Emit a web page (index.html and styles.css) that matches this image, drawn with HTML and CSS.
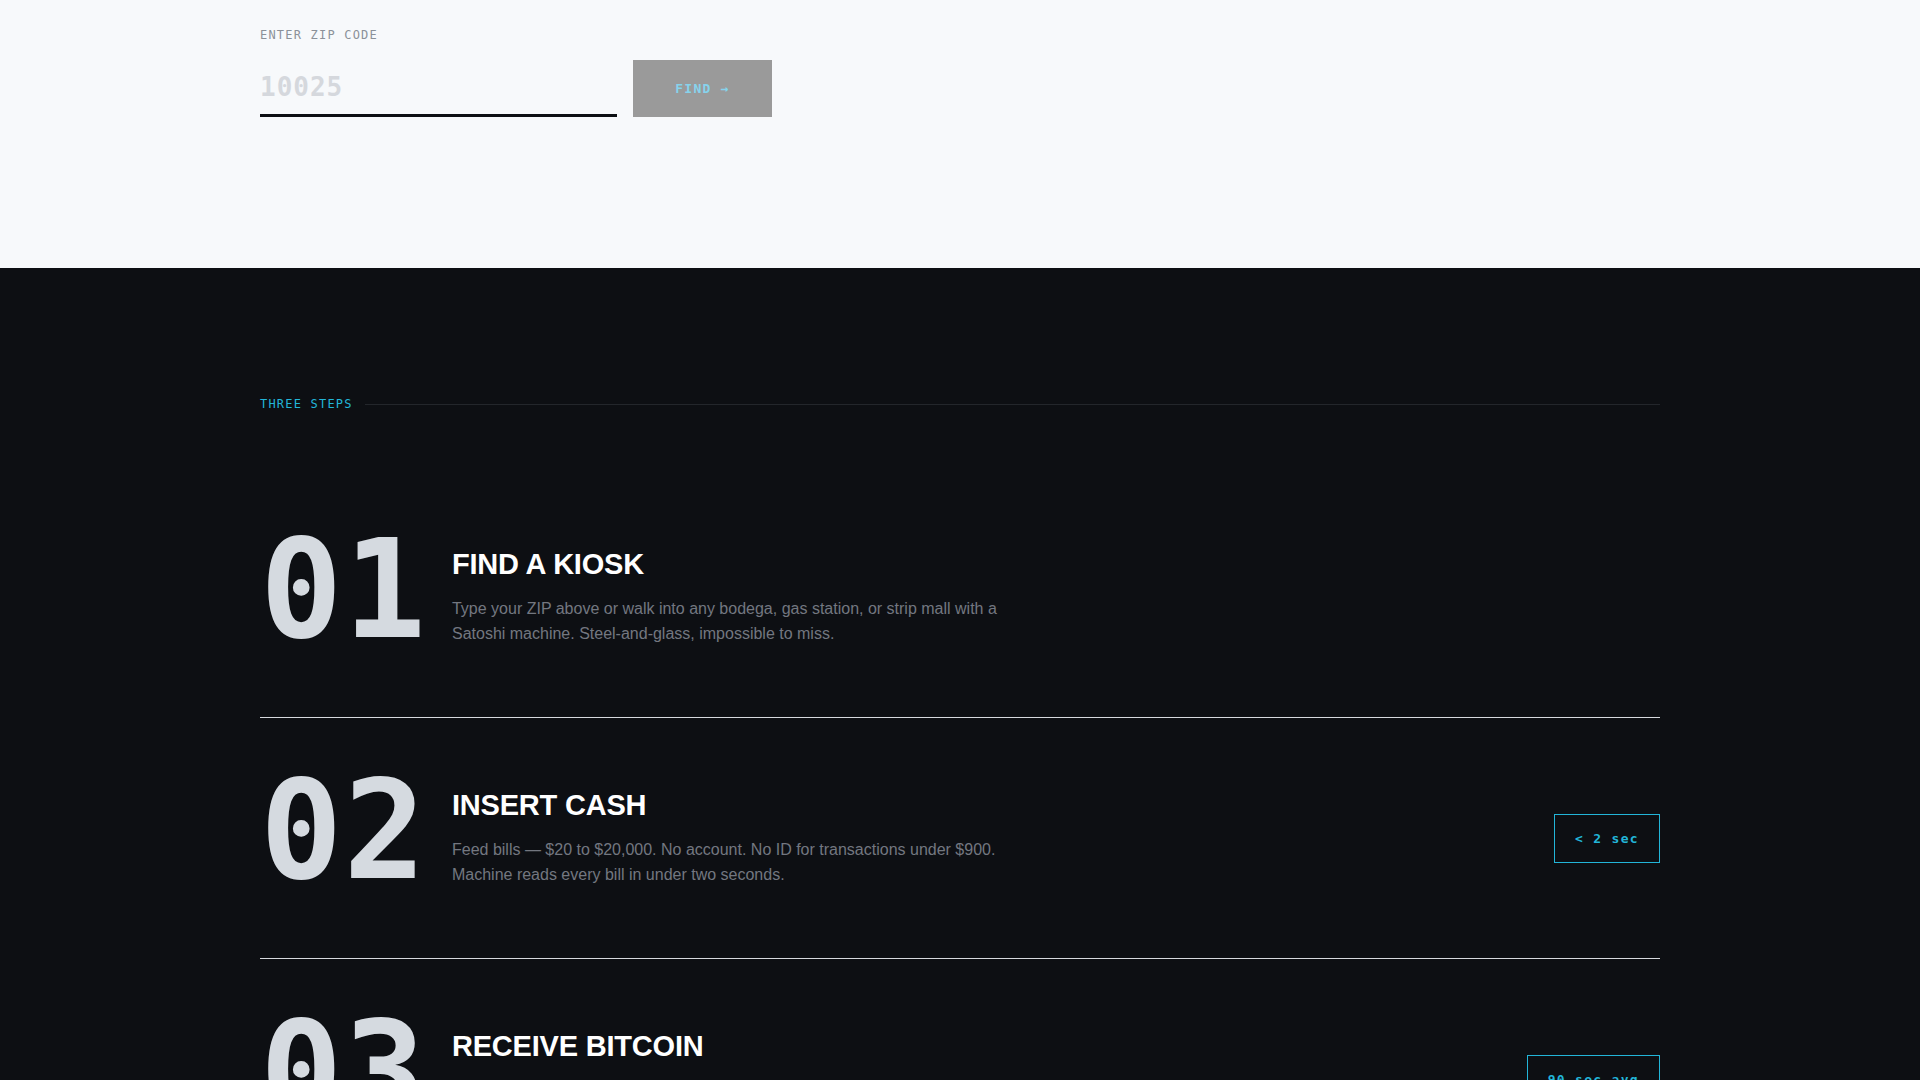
FILE: index.html
```html
<!DOCTYPE html>
<html lang="en">
<head>
    <meta charset="UTF-8">
    <meta name="viewport" content="width=device-width, initial-scale=1.0">
    <title>Satoshi Kiosks - How it works</title>
    <link rel="stylesheet" href="styles.css">
</head>
<body>
<section class="locate">
    <div class="container">
        <form class="zip-form" onsubmit="return false;">
            <label for="zip" class="zip-label">Enter ZIP code</label>
            <div class="zip-row">
                <input type="text" id="zip" name="zip" placeholder="10025" maxlength="5">
                <button type="submit" disabled>Find &rarr;</button>
            </div>
        </form>
    </div>
</section>

<section class="steps">
    <div class="container">
        <div class="section-head">
            <span class="eyebrow">Three steps</span>
            <span class="rule"></span>
        </div>

        <ol class="step-list">
            <li class="step">
                <div class="step-num">01</div>
                <div class="step-body">
                    <h3>Find a kiosk</h3>
                    <p>Type your ZIP above or walk into any bodega, gas station, or strip mall with a Satoshi machine. Steel-and-glass, impossible to miss.</p>
                </div>
            </li>
            <li class="step">
                <div class="step-num">02</div>
                <div class="step-body">
                    <h3>Insert cash</h3>
                    <p>Feed bills &mdash; $20 to $20,000. No account. No ID for transactions under $900. Machine reads every bill in under two seconds.</p>
                </div>
                <div class="tag">&lt; 2 sec</div>
            </li>
            <li class="step">
                <div class="step-num">03</div>
                <div class="step-body">
                    <h3>Receive bitcoin</h3>
                    <p>Scan your wallet's QR code and the coins are on their way. Keep the paper receipt until the transaction confirms.</p>
                </div>
                <div class="tag">90 sec avg</div>
            </li>
        </ol>
    </div>
</section>

<script>
    var zip = document.getElementById('zip');
    var findBtn = document.querySelector('.zip-row button');
    zip.addEventListener('input', function () {
        findBtn.disabled = zip.value.length !== 5;
    });
</script>
</body>
</html>
```

FILE: styles.css
```css
body {
    margin: 0;
    font-family: "Liberation Sans", Arial, sans-serif;
    background-color: #0d0f13;
}
.container {
    max-width: 1400px;
    margin: 0 auto;
}

/* zip lookup */
.locate {
    background-color: #f7f9fb;
    padding: 27px 0 151px;
}
.zip-form {
    max-width: 512px;
}
.zip-label {
    display: block;
    font-family: "DejaVu Sans Mono", monospace;
    font-size: 12px;
    line-height: 16px;
    letter-spacing: 0.1em;
    text-transform: uppercase;
    color: #8b9199;
    margin-bottom: 17px;
}
.zip-row {
    display: flex;
    gap: 16px;
}
.zip-row input {
    flex: 1;
    min-width: 0;
    height: 57px;
    box-sizing: border-box;
    padding: 0;
    border: none;
    border-bottom: 3px solid #0d0f13;
    background: transparent;
    font-family: "DejaVu Sans Mono", monospace;
    font-size: 26px;
    font-weight: bold;
    letter-spacing: 1px;
    color: #0d0f13;
    outline: none;
}
.zip-row input::placeholder {
    color: #d5d8dd;
}
.zip-row button {
    height: 57px;
    padding: 0 42px;
    border: none;
    background-color: #9a9a9a;
    color: #86d3ec;
    font-family: "DejaVu Sans Mono", monospace;
    font-size: 13px;
    font-weight: bold;
    letter-spacing: 0.1em;
    text-transform: uppercase;
    cursor: pointer;
}

/* steps */
.steps {
    padding: 128px 0 120px;
}
.section-head {
    display: flex;
    align-items: center;
    gap: 12px;
    margin-bottom: 65px;
}
.eyebrow {
    font-family: "DejaVu Sans Mono", monospace;
    font-size: 12px;
    line-height: 16px;
    letter-spacing: 0.1em;
    text-transform: uppercase;
    color: #22b5d8;
}
.rule {
    flex: 1;
    height: 1px;
    background-color: #23262b;
}
.step-list {
    list-style: none;
    margin: 0;
    padding: 0;
}
.step {
    display: grid;
    grid-template-columns: auto 1fr auto;
    column-gap: 25px;
    align-items: center;
    padding: 46px 0;
    border-bottom: 1px solid #d6d9de;
}
.step-num {
    font-family: "DejaVu Sans Mono", monospace;
    font-size: 137px;
    font-weight: bold;
    line-height: 1;
    letter-spacing: 1px;
    color: #d5dae0;
    margin: -2px 0 13px;
}
.step-body {
    max-width: 560px;
}
.step-body h3 {
    margin: 0 0 14px;
    font-size: 29px;
    line-height: 1.2;
    font-weight: bold;
    letter-spacing: -0.2px;
    text-transform: uppercase;
    color: #ffffff;
}
.step-body p {
    margin: 0;
    font-size: 16px;
    line-height: 1.6;
    color: #737780;
}
.tag {
    border: 1px solid #22b5d8;
    padding: 16px 20px;
    font-family: "DejaVu Sans Mono", monospace;
    font-size: 13px;
    font-weight: bold;
    letter-spacing: 0.1em;
    color: #22b5d8;
    white-space: nowrap;
}
```
